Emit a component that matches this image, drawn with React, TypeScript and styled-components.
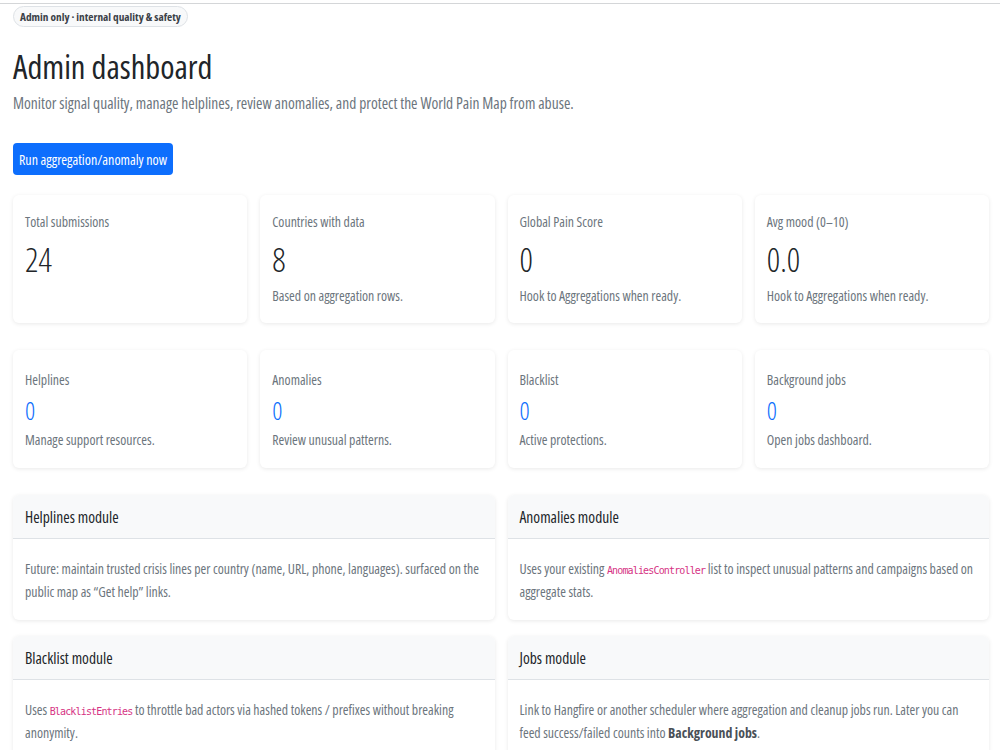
import styled, { createGlobalStyle } from "styled-components";

const Global = createGlobalStyle`
  body {
    margin: 0;
    background: #fff;
    font-family: "Open Sans", "Noto Sans", sans-serif;
    font-stretch: 75%;
    color: #212529;
  }
`;

const TopRule = styled.div`
  height: 3px;
  border-bottom: 1px solid #d4d6d8;
`;

const Page = styled.main`
  padding: 2px 11px 0 13px;
`;

const Badge = styled.span`
  display: block;
  width: fit-content;
  padding: 2px 6px;
  font-size: 11.3px;
  font-weight: 700;
  line-height: 15px;
  color: #3b4148;
  background: #f8f9fa;
  border: 1px solid #dee2e6;
  border-radius: 11px;
`;

const Title = styled.h1`
  margin: 20px 0 0;
  font-size: 32.5px;
  font-weight: 500;
  line-height: 40px;
`;

const Lead = styled.p`
  margin: 4px 0 0;
  font-size: 15.5px;
  line-height: 24px;
  color: #6c757d;
`;

const RunButton = styled.button`
  display: block;
  margin-top: 28px;
  height: 32px;
  padding: 0 6px;
  font-family: inherit;
  font-stretch: inherit;
  font-size: 14px;
  color: #fff;
  background: #0d6efd;
  border: none;
  border-radius: 4px;
`;

const Grid = styled.section<{ $cols: number; $top: number }>`
  display: grid;
  grid-template-columns: repeat(${(p) => p.$cols}, 1fr);
  column-gap: 13px;
  margin-top: ${(p) => p.$top}px;
`;

const Card = styled.div`
  background: #fff;
  border-radius: 6px;
  box-shadow: 0 1px 4px rgba(0, 0, 0, 0.09);
`;

const StatCard = styled(Card)<{ $compact?: boolean }>`
  display: flex;
  flex-direction: column;
  padding: ${(p) => (p.$compact ? "20px 12px 18px" : "17px 12px 16px")};
  min-height: ${(p) => (p.$compact ? 118 : 128)}px;
  box-sizing: border-box;
`;

const StatLabel = styled.div`
  font-size: 13.8px;
  line-height: 20px;
  color: #6c757d;
`;

const StatValue = styled.div<{ $link?: boolean }>`
  margin-top: ${(p) => (p.$link ? 6 : 9)}px;
  font-size: ${(p) => (p.$link ? 25 : 33)}px;
  line-height: ${(p) => (p.$link ? 28 : 38)}px;
  font-weight: 300;
  color: ${(p) => (p.$link ? "#0d6efd" : "#212529")};
`;

const StatNote = styled.div<{ $link?: boolean }>`
  margin-top: ${(p) => (p.$link ? 6 : 7)}px;
  font-size: 13.8px;
  line-height: 20px;
  color: #6c757d;
`;

const ModuleCard = styled(Card)`
  overflow: hidden;
`;

const ModuleHeader = styled.div`
  height: 43px;
  display: flex;
  align-items: center;
  padding: 0 12px;
  background: #f8f9fa;
  border-bottom: 1px solid #dee2e6;
  font-size: 15.5px;
`;

const ModuleBody = styled.div`
  padding: 18px 11px 17px 12px;
  font-size: 13.8px;
  line-height: 23px;
  color: #6c757d;
`;

const Code = styled.code`
  font-family: "DejaVu Sans Mono", "Liberation Mono", monospace;
  font-size: 10px;
  letter-spacing: -0.85px;
  line-height: 1;
  color: #d63384;
`;

const Strong = styled.strong`
  font-weight: 700;
  color: #495057;
`;

type Stat = { label: string; value: string; note?: string };

const summary: Stat[] = [
  { label: "Total submissions", value: "24" },
  { label: "Countries with data", value: "8", note: "Based on aggregation rows." },
  { label: "Global Pain Score", value: "0", note: "Hook to Aggregations when ready." },
  { label: "Avg mood (0–10)", value: "0.0", note: "Hook to Aggregations when ready." },
];

const tools: Stat[] = [
  { label: "Helplines", value: "0", note: "Manage support resources." },
  { label: "Anomalies", value: "0", note: "Review unusual patterns." },
  { label: "Blacklist", value: "0", note: "Active protections." },
  { label: "Background jobs", value: "0", note: "Open jobs dashboard." },
];

function StatTile({ stat, link }: { stat: Stat; link?: boolean }) {
  return (
    <StatCard $compact={link}>
      <StatLabel>{stat.label}</StatLabel>
      <StatValue $link={link}>{stat.value}</StatValue>
      {stat.note && <StatNote $link={link}>{stat.note}</StatNote>}
    </StatCard>
  );
}

function Module({ title, children }: { title: string; children: React.ReactNode }) {
  return (
    <ModuleCard>
      <ModuleHeader>{title}</ModuleHeader>
      <ModuleBody>{children}</ModuleBody>
    </ModuleCard>
  );
}

export default function App() {
  return (
    <>
      <Global />
      <TopRule />
      <Page>
        <Badge>Admin only · internal quality &amp; safety</Badge>
        <Title>Admin dashboard</Title>
        <Lead>
          Monitor signal quality, manage helplines, review anomalies, and protect the World Pain Map from abuse.
        </Lead>
        <RunButton>Run aggregation/anomaly now</RunButton>

        <Grid $cols={4} $top={20}>
          {summary.map((s) => (
            <StatTile key={s.label} stat={s} />
          ))}
        </Grid>

        <Grid $cols={4} $top={27}>
          {tools.map((s) => (
            <StatTile key={s.label} stat={s} link />
          ))}
        </Grid>

        <Grid $cols={2} $top={27}>
          <Module title="Helplines module">
            Future: maintain trusted crisis lines per country (name, URL, phone, languages). surfaced on the public
            map as “Get help” links.
          </Module>
          <Module title="Anomalies module">
            Uses your existing <Code>AnomaliesController</Code> list to inspect unusual patterns and campaigns based
            on aggregate stats.
          </Module>
        </Grid>

        <Grid $cols={2} $top={16}>
          <Module title="Blacklist module">
            Uses <Code>BlacklistEntries</Code> to throttle bad actors via hashed tokens / prefixes without breaking
            anonymity.
          </Module>
          <Module title="Jobs module">
            Link to Hangfire or another scheduler where aggregation and cleanup jobs run. Later you can feed
            success/failed counts into <Strong>Background jobs</Strong>.
          </Module>
        </Grid>
      </Page>
    </>
  );
}
